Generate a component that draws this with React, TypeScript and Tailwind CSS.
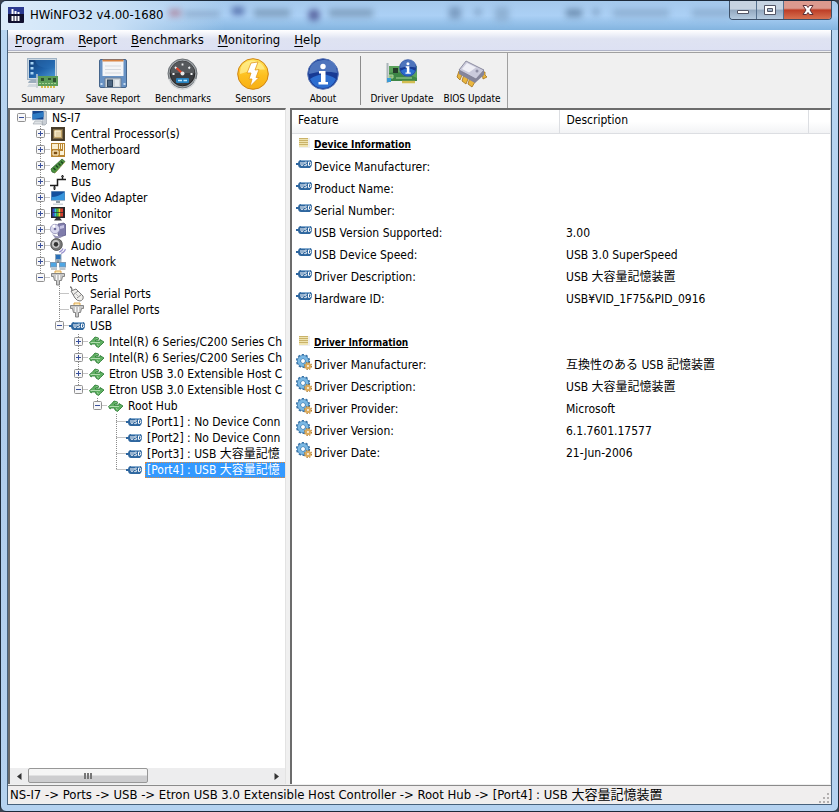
import { useState } from "react";
import type { ComponentType, ReactNode } from "react";

type IconType = ComponentType;

function Icon16({ children }: { children: ReactNode }) {
	return (
		<svg width="16" height="16" viewBox="0 0 16 16" className="block shrink-0" aria-hidden="true">
			{children}
		</svg>
	);
}

function ComputerIcon() {
	return (
		<Icon16>
			<path d="M12 1h3l1 2v10l-2 2h-3z" fill="#c9ced4" stroke="#8c949c" strokeWidth=".6" />
			<rect x="1" y=".5" width="12" height="10" fill="#d7dde2" />
			<rect x="1.5" y="1" width="11" height="8.5" fill="#16478f" />
			<path d="M1.5 9.500V4l11-2v5z" fill="#2f7cc4" />
			<path d="M4 11h6l2 3H2z" fill="#dfe3e6" stroke="#9aa3ab" strokeWidth=".6" />
		</Icon16>
	);
}

function CpuIcon() {
	return (
		<Icon16>
			<rect x="1" y="1" width="14" height="14" fill="#4a3f2c" />
			<rect x="2.500" y="2.500" width="11" height="11" fill="#7d6a48" stroke="#2b2418" strokeDasharray="1 1" />
			<rect x="4.500" y="4.500" width="7" height="7" fill="#e4d2a8" stroke="#c0a468" />
			<path d="M5 10.500V5h5.500" stroke="#fff6da" fill="none" />
		</Icon16>
	);
}

function BoardIcon() {
	return (
		<Icon16>
			<rect x="1" y="1" width="14" height="14" fill="#b98530" />
			<path d="M2 2h6v5H2z" fill="#f8edcc" />
			<path d="M3 3.500h4M3 5.500h4M9.500 2v5M11.500 2v5M13.500 2v11M3 9h5v4H3z" stroke="#fbf2d8" fill="none" />
			<path d="M10 9h3v4h-3z" fill="#fbf2d8" />
			<path d="M4 10h3v2H4z" fill="#7b4d12" />
		</Icon16>
	);
}

function MemoryIcon() {
	return (
		<Icon16>
			<path d="M1 11 12 1l3 2.500L5 15l-3-1z" fill="#4c9440" stroke="#2a5a26" strokeWidth=".7" />
			<path d="m3.500 10 2 2M6 7.500l2 2M8.500 5.500l2 2M11 3.500l2 2" stroke="#1d4023" strokeWidth="1.400" />
			<path d="M5 15 15 4" stroke="#cbb656" strokeWidth=".9" strokeDasharray="1 1" />
		</Icon16>
	);
}

function BusIcon() {
	return (
		<Icon16>
			<path d="M0 11.500h7.500V5.500H16M12.500 1v4M4.500 11.500V16" stroke="#1c1c1c" strokeWidth="1.500" fill="none" />
			<path d="M11 2.500h3M3 14h3" stroke="#555" />
		</Icon16>
	);
}

function DisplayIcon() {
	return (
		<Icon16>
			<rect x="1" y="1" width="14" height="10" fill="#9eb4c8" />
			<rect x="1.500" y="1.500" width="13" height="8.500" fill="#14509e" />
			<path d="M1.500 10V7q7 0 13-5v8z" fill="#3795dc" />
			<path d="M6 11h4v2H6z" fill="#8f9ba6" />
			<path d="M3 13.500h10v1.500H3z" fill="#ced5db" />
		</Icon16>
	);
}

function ColorMonitorIcon() {
	return (
		<Icon16>
			<rect x="1" y="1" width="14" height="11" fill="#26262a" />
			<path d="M2.500 2.500h2v8h-2z" fill="#3848d8" />
			<path d="M4.500 2.500h2v8h-2z" fill="#35c4d4" />
			<path d="M6.500 2.500h2v8h-2z" fill="#48c23c" />
			<path d="M8.500 2.500h2v8h-2z" fill="#e8d838" />
			<path d="M10.500 2.500h2.500v8h-2.500z" fill="#d83c30" />
			<path d="M2.500 6.500H13" stroke="#26262a" strokeWidth=".7" />
			<path d="M6 12h4l2 2.500H4z" fill="#36363a" />
		</Icon16>
	);
}

function DriveIcon() {
	return (
		<Icon16>
			<path d="M8 2l6-1 2 2v10l-6 2-2-2z" fill="#7f7cab" stroke="#57547f" strokeWidth=".7" />
			<path d="m10 4 4-1v3l-4 1z" fill="#c6c4e4" />
			<circle cx="5" cy="7" r="4.700" fill="#d9d8ee" stroke="#8e8cb4" strokeWidth=".8" />
			<path d="M5 7 2 4a4 4 0 0 1 3-1.500z" fill="#fff" />
			<circle cx="5" cy="7" r="1.300" fill="#6f6c9c" />
			<path d="m2 12 4 2 7 .500-3 1.500H5z" fill="#9896b8" />
		</Icon16>
	);
}

function AudioIcon() {
	return (
		<Icon16>
			<ellipse cx="6.500" cy="6.500" rx="5.800" ry="6" fill="#777" stroke="#444" strokeWidth=".8" />
			<ellipse cx="5.800" cy="6" rx="3.800" ry="4" fill="#c9c9c9" />
			<ellipse cx="6" cy="6.300" rx="2.200" ry="2.400" fill="#333" />
			<path d="M9 14q3-.5 4-3.500M11 15.500q3.500-1 4.500-4.500" stroke="#9b93cf" fill="none" strokeWidth="1.100" />
		</Icon16>
	);
}

function NetworkIcon() {
	return (
		<Icon16>
			<path d="M8 5v3M4 10l4-2 4 2" stroke="#555" fill="none" />
			<rect x="5.500" y=".5" width="5.500" height="5" fill="#2a6fb8" stroke="#8fa6bb" />
			<path d="M5 7h6.500" stroke="#8f9ba6" strokeWidth="1.500" />
			<rect x=".5" y="8.500" width="6" height="4.500" fill="#4ea6e4" stroke="#7c98b4" />
			<rect x="9.500" y="8.500" width="6" height="4.500" fill="#4ea6e4" stroke="#7c98b4" />
			<path d="M1 15h6M9.500 15h6" stroke="#a9b4bd" strokeWidth="1.600" />
		</Icon16>
	);
}

function PlugIcon() {
	return (
		<Icon16>
			<path d="M5 3V1h6v2" fill="#ffeec0" stroke="#dca54c" />
			<path d="M1.500 3.500h13v3h-2l-1 4h-2V15h-3v-4.500h-2l-1-4h-2z" fill="#c9c9c9" stroke="#858585" />
			<path d="M6.500 5v5M9.500 5v5" stroke="#f6f6f6" />
		</Icon16>
	);
}

function SerialIcon() {
	return (
		<Icon16>
			<path d="M1 1q2 0 2 4" fill="none" stroke="#777" strokeWidth="1.300" />
			<path d="m2 5 5-2 7 7q1 4-3 5-3 0-5-3z" fill="#f0efec" stroke="#777" />
			<path d="m4 9 5-4M8 12l4.500-3.500" stroke="#888" />
			<path d="m6 7 3 3" stroke="#bbb" />
		</Icon16>
	);
}

function UsbIcon() {
	return (
		<Icon16>
			<path d="M0 8h3" stroke="#2d659f" strokeWidth="2" />
			<path d="M5 4h9q2 0 2 3.500T14 12H5Q2 12 2 8t3-4z" fill="#2f679f" />
			<path d="M5 4.500h9" stroke="#86acd0" />
			<path d="M5 6v2.500q0 1 1 1t1-1V6M10.800 6.200H9.500q-1 0-1 .8t1 .8q1.200 0 1.200.9t-1 .9H8.300M12.500 9.500V6h1q1.300 0 1.300 1.700T13.500 9.500z" fill="none" stroke="#fff" strokeWidth="1" />
		</Icon16>
	);
}

function HubIcon() {
	return (
		<Icon16>
			<path d="M1.500 8.500 4 6.500l3-3.500 3.500 1-.5 2H8L7 7h5l0-1.500L16 8l-3.500 3.500-2 2L8 12l-.5-2H4.500L3 11z" fill="#5fb062" stroke="#32803a" strokeWidth=".9" strokeLinejoin="round" />
			<path d="M2.500 8.500H12M8.500 4.500h1M9 10.500l1.500 1" stroke="#b8e2b6" strokeWidth=".9" />
		</Icon16>
	);
}

function NoteIcon() {
	return (
		<Icon16>
			<path d="M3 4h11v10H3z" fill="#efeff0" />
			<path d="M3 4h9v9H3z" fill="#efe3ae" />
			<path d="M3 4.500h9M3 6.500h9M3 8.500h9M3 10.500h9" stroke="#c9b269" />
		</Icon16>
	);
}

function GearIcon() {
	return (
		<Icon16>
			<circle cx="7" cy="7" r="6.300" fill="none" stroke="#3673a8" strokeWidth="1.600" strokeDasharray="2.200 1.758" />
			<circle cx="7" cy="7" r="4" fill="none" stroke="#3673a8" strokeWidth="4" />
			<circle cx="7" cy="7" r="4" fill="none" stroke="#7ab8e4" strokeWidth="2.800" />
			<circle cx="12" cy="12" r="3.300" fill="none" stroke="#b07828" strokeWidth="1.400" strokeDasharray="1.500 1.090" />
			<circle cx="12" cy="12" r="2" fill="#fff" stroke="#dcab5c" strokeWidth="2.200" />
		</Icon16>
	);
}

function Icon32({ children }: { children: ReactNode }) {
	return (
		<svg width="32" height="32" viewBox="0 0 32 32" className="block" aria-hidden="true">
			{children}
		</svg>
	);
}

function SummaryIcon() {
	return (
		<Icon32>
			<defs>
				<linearGradient id="screen" x1="0" y1="0" x2="1" y2="1">
					<stop offset="0" stopColor="#123c72" />
					<stop offset=".5" stopColor="#1d5fa6" />
					<stop offset="1" stopColor="#4c9ad8" />
				</linearGradient>
			</defs>
			<rect x=".5" y=".5" width="29" height="21" fill="#c8d6e2" stroke="#9fb2c4" />
			<rect x="2" y="2" width="26" height="18" fill="url(#screen)" />
			<path d="M3.500 4h3v2.500h-3zM3.500 9h3v2.500h-3zM3.500 14h3v2.500h-3z" fill="#a7d4f4" />
			<path d="M8 2q2 10 20 8V2z" fill="#2a6db4" opacity=".5" />
			<path d="M4 22h7v3H1l1-2z" fill="#9cadbc" />
			<path d="M2 26h9v3H0z" fill="#d2d9df" />
			<rect x="11" y="18" width="20" height="10" fill="#5b9c58" />
			<path d="M10 16v14" stroke="#c4ccd0" strokeWidth="1.500" />
			<path d="M14 20h3v3h-3zM21 20h3v2h-3zM26 20h3v4h-3z" fill="#2c5230" />
			<path d="M12 25.500h17" stroke="#a4d292" strokeDasharray="2 1" />
			<path d="M14 29h15" stroke="#d6be50" strokeWidth="2" strokeDasharray="2 1" />
		</Icon32>
	);
}

function FloppyIcon() {
	return (
		<Icon32>
			<rect x="2.500" y="1.500" width="27" height="28" rx="1.500" fill="#6892c4" stroke="#45658c" />
			<path d="M5.500 2h21v16h-21z" fill="#f4f5f7" />
			<path d="M5.500 1.500h21v2h-21z" fill="#d98444" />
			<path d="M8 8h16M8 11.500h16M8 15h16" stroke="#d5d9df" />
			<path d="M8 20h16v9.500H8z" fill="#ced4d8" stroke="#6a7f98" />
			<rect x="10.500" y="22" width="5" height="6.500" fill="#4d6681" stroke="#30465d" />
			<path d="M18 22h4v6h-4z" fill="#e5eaee" />
			<path d="M3.500 26h2M26.500 26h2" stroke="#c6daee" strokeWidth="2" />
		</Icon32>
	);
}

function GaugeIcon() {
	return (
		<Icon32>
			<circle cx="15.500" cy="15.500" r="14.500" fill="#9ba0a4" stroke="#6b7074" />
			<circle cx="15.500" cy="15.500" r="12.300" fill="#3b3d40" stroke="#222" />
			<path d="M3.500 15a12 12 0 0 1 24 0z" fill="#56595c" />
			<path d="M5.500 16h2M8 9l1.500 1.500M15.500 5.500v2M23 9l-1.500 1.500M25.500 16h-2" stroke="#f0f1f2" strokeWidth="1.800" />
			<path d="M15.500 15.500 9.500 10" stroke="#e2452c" strokeWidth="2.200" />
			<circle cx="15.500" cy="15.500" r="2" fill="#e8e8e8" />
			<rect x="9" y="20" width="13" height="5" rx="1" fill="#2682bf" />
			<path d="M11 22.500h4M16.500 22.500h3.500" stroke="#c3e9ff" strokeWidth="1.500" />
			<path d="M2 21a14 14 0 0 0 27 0" fill="none" stroke="#d4d7d9" strokeWidth="1.200" />
		</Icon32>
	);
}

function SensorIcon() {
	return (
		<Icon32>
			<defs>
				<linearGradient id="gold" x1="0" y1="0" x2="0" y2="1">
					<stop offset="0" stopColor="#ffe45a" />
					<stop offset=".55" stopColor="#fdbf20" />
					<stop offset="1" stopColor="#f8b014" />
				</linearGradient>
			</defs>
			<circle cx="16" cy="16" r="15.300" fill="url(#gold)" stroke="#cf8412" />
			<path d="M3 16Q2 5 14 2.500q11 0 14 9Q16 11 3 16z" fill="#fff2a0" opacity=".65" />
			<path d="m14 5 7-1-3 8 4-.5-3 8h3l-9 9 2-7.500h-3l2-6h-4z" fill="#fff" stroke="#e39a1b" strokeWidth=".8" />
		</Icon32>
	);
}

function InfoDisc() {
	return (
		<>
			<circle cx="16" cy="16" r="15.300" fill="#173a94" stroke="#5573b4" />
			<path d="M3 21q13-9 26 0-4 9-13 9T3 21z" fill="#2d6ed0" />
			<path d="M2 16Q2 3 16 2t14 13q-14-3-28 1z" fill="#6288ca" opacity=".75" />
			<circle cx="16" cy="8.500" r="2.700" fill="#fff" />
			<path d="M12 13h6.500v11H21v2.500h-9.500V24H14v-8.500h-2z" fill="#fff" />
		</>
	);
}

function AboutIcon() {
	return (
		<Icon32>
			<InfoDisc />
		</Icon32>
	);
}

function DriverIcon() {
	return (
		<Icon32>
			<path d="M1.500 5v20" stroke="#aab5b9" strokeWidth="2" />
			<path d="M3 8h28v15H3z" fill="#5ba35c" />
			<path d="M3 8h28M3 15q12-3 28 5v3H3z" fill="#3d8646" />
			<path d="M7 10h5v5H7z" fill="#243c2b" />
			<path d="M3 17h4v3H3zM10 20h16" stroke="#a7d598" fill="#85ad73" />
			<path d="M16 24h13" stroke="#d3be52" strokeWidth="2.500" />
			<path d="M1 20h4v4H1z" fill="#3b9bd8" />
			<g transform="translate(13 1) scale(.56)">
				<InfoDisc />
			</g>
		</Icon32>
	);
}

function BiosIcon() {
	return (
		<Icon32>
			<path d="m3 13 3 0v4l-2 5-3-3zM8 16l4 1v4l-2 5-4-3zM14 19l5 1v4l-3 5-4-3z" fill="#eab63e" stroke="#a27220" strokeWidth=".8" />
			<path d="m26 14 3 0 0 3 2 2-4 2z" fill="#eab63e" stroke="#a27220" strokeWidth=".8" />
			<path d="m3 12 7-8 18 8v5l-9 8-16-9z" fill="#85859a" />
			<path d="m3 12 7-9 18 9-8 9z" fill="#cacadb" stroke="#7c7c92" strokeWidth=".8" />
			<path d="m6 11 5-6 9 4.500-7 5z" fill="#efeff6" />
			<circle cx="21" cy="13" r="1.500" fill="#8f8fa5" />
		</Icon32>
	);
}

type Node = { label: string; icon: IconType; closed?: boolean; selected?: boolean; children?: Node[] };

const tree: Node = {
	label: "NS-I7",
	icon: ComputerIcon,
	children: [
		{ label: "Central Processor(s)", icon: CpuIcon, closed: true },
		{ label: "Motherboard", icon: BoardIcon, closed: true },
		{ label: "Memory", icon: MemoryIcon, closed: true },
		{ label: "Bus", icon: BusIcon, closed: true },
		{ label: "Video Adapter", icon: DisplayIcon, closed: true },
		{ label: "Monitor", icon: ColorMonitorIcon, closed: true },
		{ label: "Drives", icon: DriveIcon, closed: true },
		{ label: "Audio", icon: AudioIcon, closed: true },
		{ label: "Network", icon: NetworkIcon, closed: true },
		{
			label: "Ports",
			icon: PlugIcon,
			children: [
				{ label: "Serial Ports", icon: SerialIcon },
				{ label: "Parallel Ports", icon: PlugIcon },
				{
					label: "USB",
					icon: UsbIcon,
					children: [
						{ label: "Intel(R) 6 Series/C200 Series Ch", icon: HubIcon, closed: true },
						{ label: "Intel(R) 6 Series/C200 Series Ch", icon: HubIcon, closed: true },
						{ label: "Etron USB 3.0 Extensible Host C", icon: HubIcon, closed: true },
						{
							label: "Etron USB 3.0 Extensible Host C",
							icon: HubIcon,
							children: [
								{
									label: "Root Hub",
									icon: HubIcon,
									children: [
										{ label: "[Port1] : No Device Conn", icon: UsbIcon },
										{ label: "[Port2] : No Device Conn", icon: UsbIcon },
										{ label: "[Port3] : USB 大容量記憶", icon: UsbIcon },
										{ label: "[Port4] : USB 大容量記憶", icon: UsbIcon, selected: true },
									],
								},
							],
						},
					],
				},
			],
		},
	],
};

function Guide({ d, box }: { d: string; box?: "plus" | "minus" }) {
	return (
		<svg width="19" height="16" viewBox="0 0 19 16" className="block shrink-0" aria-hidden="true">
			<path d={d} stroke="#8a8a8a" strokeDasharray="1 1" fill="none" />
			{box && (
				<>
					<rect x="5.500" y="3.500" width="8" height="8" rx="1" fill="#f7f7f8" stroke="#919191" />
					<path d={box === "plus" ? "M7 7.500h5M9.500 5v5" : "M7 7.500h5"} stroke="#39509c" />
				</>
			)}
		</svg>
	);
}

function TreeNode({ node, guides = [], root, last }: { node: Node; guides?: boolean[]; root?: boolean; last: boolean }) {
	const [open, setOpen] = useState(!node.closed);
	const expandable = !!node.children || !!node.closed;
	const vertical = root ? "" : last ? "M9.500 0v8" : "M9.500 0v16";
	const guide = <Guide d={`${vertical}M9.500 7.500h10`} box={expandable ? (open ? "minus" : "plus") : undefined} />;

	return (
		<li role="treeitem" aria-expanded={expandable ? open : undefined} aria-selected={!!node.selected}>
			<div className="flex h-4 items-center whitespace-nowrap">
				{guides.map((line, i) => (
					<Guide key={i} d={line ? "M9.500 0v16" : ""} />
				))}
				{expandable ? (
					<button type="button" aria-label={`Toggle ${node.label}`} onClick={() => setOpen(!open)} className="shrink-0">
						{guide}
					</button>
				) : (
					guide
				)}
				<node.icon />
				<span
					className={
						node.selected
							? "ml-[3px] flex-1 border border-r-0 border-dotted border-[#e08a3c] bg-[#3399ff] pl-px leading-[14px] text-white"
							: "ml-[3px] pl-0.5 leading-4"
					}
				>
					{node.label}
				</span>
			</div>
			{open && node.children && (
				<ul role="group">
					{node.children.map((child, i) => (
						<TreeNode
							key={i}
							node={child}
							guides={root ? [false] : [...guides, !last]}
							last={i === node.children!.length - 1}
						/>
					))}
				</ul>
			)}
		</li>
	);
}

type Section = { title: string; icon: IconType; rows: [string, string][] };

const sections: Section[] = [
	{
		title: "Device Information",
		icon: UsbIcon,
		rows: [
			["Device Manufacturer:", ""],
			["Product Name:", ""],
			["Serial Number:", ""],
			["USB Version Supported:", "3.00"],
			["USB Device Speed:", "USB 3.0 SuperSpeed"],
			["Driver Description:", "USB 大容量記憶装置"],
			["Hardware ID:", "USB¥VID_1F75&PID_0916"],
		],
	},
	{
		title: "Driver Information",
		icon: GearIcon,
		rows: [
			["Driver Manufacturer:", "互換性のある USB 記憶装置"],
			["Driver Description:", "USB 大容量記憶装置"],
			["Driver Provider:", "Microsoft"],
			["Driver Version:", "6.1.7601.17577"],
			["Driver Date:", "21-Jun-2006"],
		],
	},
];

function DetailSection({ section }: { section: Section }) {
	return (
		<tbody>
			<tr className="h-[22px]">
				<th colSpan={3} scope="rowgroup" className="p-0 text-left">
					<div className="flex h-[22px] pl-1">
						<NoteIcon />
						<span className="pl-0.5 text-[10px] leading-[22px] font-bold underline">{section.title}</span>
					</div>
				</th>
			</tr>
			{section.rows.map(([feature, value]) => (
				<tr key={feature} className="h-[22px]">
					<td className="p-0">
						<div className="flex h-[22px] pl-1">
							<section.icon />
							<span className="pl-0.5 leading-[22px]">{feature}</span>
						</div>
					</td>
					<td colSpan={2} className="p-0 pl-[7px] leading-[22px]">
						{value}
					</td>
				</tr>
			))}
		</tbody>
	);
}

const menus = ["Program", "Report", "Benchmarks", "Monitoring", "Help"];

function ToolButton({ label, icon: Icon }: { label: string; icon: IconType }) {
	return (
		<button type="button" className="flex w-[70px] shrink-0 flex-col items-center gap-0.5 pt-[5px] text-[10px] leading-[14px] whitespace-nowrap">
			<Icon />
			{label}
		</button>
	);
}

function TitleBar() {
	return (
		<header className="relative flex h-[29px] shrink-0 items-start overflow-hidden rounded-t-md bg-gradient-to-b from-[#a5c9ec] via-[#abd0f5] to-[#83b4df]">
			<div className="absolute inset-y-0 left-0 w-56 bg-gradient-to-r from-[#dcecfa] via-[#c9e0f6] to-transparent" />
			<div className="absolute inset-0 opacity-60 blur-[3px]" aria-hidden="true">
				<span className="absolute top-2 left-[168px] h-2 w-3 bg-[#a86a82]" />
				<span className="absolute top-2.5 left-[183px] h-1.5 w-9 bg-[#7492b4]" />
				<span className="absolute top-1.5 left-[231px] h-2 w-3 bg-[#263c86]" />
				<span className="absolute top-2 left-[253px] h-2 w-9 bg-[#65829f]" />
				<span className="absolute top-2 left-[307px] size-3 rounded-full bg-[#231f69]" />
				<span className="absolute top-2 left-[328px] h-2 w-11 bg-[#65829f]" />
				<span className="absolute top-1.5 left-[448px] size-3 bg-[#5c7ba0]" />
				<span className="absolute top-2 left-[474px] size-1.5 bg-[#5c7ba0]" />
				<span className="absolute top-1.5 left-[494px] size-3.5 bg-[#7c9dbf]" />
				<span className="absolute top-2 left-[565px] h-2 w-4 bg-[#486688]" />
				<span className="absolute top-2 left-[592px] size-1.5 bg-[#5c7ba0]" />
				<span className="absolute top-2 left-[612px] h-2 w-14 bg-[#7c9dbf]" />
				<span className="absolute top-2 left-[691px] h-2 w-10 bg-[#7c9dbf]" />
			</div>
			<div className="relative flex min-w-0 flex-1 items-center gap-1.5 pt-1.5 pl-[7px]">
				<svg width="16" height="16" viewBox="0 0 16 16" aria-hidden="true">
					<rect width="16" height="16" rx="1" fill="#10102e" />
					<path d="M0 0h16v7H0z" fill="#2b3a90" />
					<path d="M4.500 2v5M7.500 4v3M10.500 5v2M4.500 9v5M7.500 9v5M10.500 9v5" stroke="#fff" strokeWidth="2" />
				</svg>
				<h1 className="text-[13px] leading-4">HWiNFO32 v4.00-1680</h1>
			</div>
			<div className="relative mr-1.5 flex h-[19px] shrink-0 overflow-hidden rounded-b border border-t-0 border-[#3d5068]">
				<button type="button" aria-label="Minimize" className="flex w-[27px] items-center justify-center border-r border-[#55708e] bg-gradient-to-b from-[#c6d3e1] from-45% via-[#93a8bf] via-50% to-[#b5cbe0]">
					<svg width="14" height="14" viewBox="0 0 14 14">
						<path d="M1.500 7.500h11v3h-11z" fill="#fff" stroke="#535666" />
					</svg>
				</button>
				<button type="button" aria-label="Maximize" className="flex w-[27px] items-center justify-center border-r border-[#55708e] bg-gradient-to-b from-[#c6d3e1] from-45% via-[#93a8bf] via-50% to-[#b5cbe0]">
					<svg width="14" height="14" viewBox="0 0 14 14">
						<path fillRule="evenodd" d="M1.500 2.500h11v9h-11zM4.500 5.500v3h5v-3z" fill="#fff" stroke="#535666" />
					</svg>
				</button>
				<button type="button" aria-label="Close" className="flex w-[47px] items-center justify-center bg-gradient-to-b from-[#dc9a8e] from-40% via-[#bd3d26] via-50% to-[#d77050]">
					<svg width="14" height="14" viewBox="0 0 14 14">
						<path d="M2 2.500h3.500L7 4.500l1.500-2H12L9 7l3 4.500H8.500L7 9.500l-1.500 2H2L5 7z" fill="#fff" stroke="#5d3036" />
					</svg>
				</button>
			</div>
		</header>
	);
}

export default function App() {
	return (
		<div className="flex h-screen flex-col bg-[#3b4350] font-['DejaVu_Sans_Condensed','Noto_Sans','Noto_Sans_CJK_JP',sans-serif] text-xs text-black">
			<div className="flex min-h-0 flex-1 flex-col rounded-md border border-[#1d2a3a] bg-gradient-to-b from-[#b9d6f2] via-[#b0cdec] to-[#b5d2f0]">
				<TitleBar />
				<div className="mx-[7px] mb-[7px] flex min-h-0 flex-1 flex-col bg-[#f0f0f0] outline outline-[#47617c]">
					<nav className="flex h-[21px] shrink-0 items-center border-b border-[#b0b4c8] bg-gradient-to-b from-white via-[#dfe3f2] via-45% to-[#dde1f3] text-[13px]">
						{menus.map((menu) => (
							<button key={menu} type="button" className="px-[7px] leading-5">
								<span className="underline underline-offset-2">{menu[0]}</span>
								{menu.slice(1)}
							</button>
						))}
					</nav>
					<div className="mt-px flex h-[56px] shrink-0 overflow-hidden border-t border-[#a0a0a0]">
						<ToolButton label="Summary" icon={SummaryIcon} />
						<ToolButton label="Save Report" icon={FloppyIcon} />
						<ToolButton label="Benchmarks" icon={GaugeIcon} />
						<ToolButton label="Sensors" icon={SensorIcon} />
						<ToolButton label="About" icon={AboutIcon} />
						<div className="mt-[3px] mr-1.5 mb-[3px] ml-0.5 w-px bg-[#8c8c8c]" />
						<ToolButton label="Driver Update" icon={DriverIcon} />
						<ToolButton label="BIOS Update" icon={BiosIcon} />
						<div className="w-px bg-[#a0a0a0]" />
					</div>
					<main className="flex min-h-0 flex-1 gap-1">
						<section className="flex w-[278px] shrink-0 flex-col border-t-2 border-r border-l-2 border-t-[#6c6c6c] border-r-[#e3e3e3] border-l-[#6c6c6c] bg-white">
							<ul role="tree" aria-label="Hardware" className="min-h-0 flex-1 overflow-hidden pl-0.5">
								<TreeNode node={tree} root last />
							</ul>
							<div className="flex h-4 shrink-0 bg-[#ededee]">
								<button type="button" aria-label="Scroll left" className="flex w-[18px] items-center justify-center">
									<svg width="5" height="7" viewBox="0 0 5 7">
										<path d="M4.500 0v7L0 3.500z" fill="#333" />
									</svg>
								</button>
								<div className="flex-1">
									<div className="flex h-[15px] w-1/2 items-center justify-center gap-px rounded-xs border border-[#979797] bg-gradient-to-b from-[#f5f5f5] from-45% to-[#cdcdcf] to-55%">
										<span className="h-1.5 w-0.5 bg-[#777]" />
										<span className="h-1.5 w-0.5 bg-[#777]" />
										<span className="h-1.5 w-0.5 bg-[#777]" />
									</div>
								</div>
								<button type="button" aria-label="Scroll right" className="flex w-[18px] items-center justify-center">
									<svg width="5" height="7" viewBox="0 0 5 7">
										<path d="M.5 0v7L5 3.500z" fill="#333" />
									</svg>
								</button>
							</div>
						</section>
						<section className="min-w-0 flex-1 overflow-hidden border-t-2 border-r border-l-2 border-t-[#6c6c6c] border-r-[#e3e3e3] border-l-[#6c6c6c] bg-white">
							<table className="w-full table-fixed border-collapse">
								<colgroup>
									<col className="w-[267px]" />
									<col className="w-[249px]" />
									<col />
								</colgroup>
								<thead>
									<tr className="h-[23px] bg-gradient-to-b from-white from-50% to-[#f2f3f5]">
										<th className="border-r border-b border-[#dcdee2] p-0 pb-0.5 pl-1.5 text-left font-normal">Feature</th>
										<th className="border-r border-b border-[#dcdee2] p-0 pb-0.5 pl-[7px] text-left font-normal">Description</th>
										<td className="border-b border-[#dcdee2] p-0" />
									</tr>
								</thead>
								<DetailSection section={sections[0]} />
								<tbody>
									<tr className="h-[22px]">
										<td colSpan={3} className="p-0" />
									</tr>
								</tbody>
								<DetailSection section={sections[1]} />
							</table>
						</section>
					</main>
					<footer className="mt-px flex h-[19px] shrink-0 items-center border-t border-[#8b8b8b] bg-[#f0eeee] pl-0.5 text-[13px]">
						<span className="min-w-0 flex-1 truncate">
							NS-I7 -&gt; Ports -&gt; USB -&gt; Etron USB 3.0 Extensible Host Controller -&gt; Root Hub -&gt; [Port4] : USB 大容量記憶装置
						</span>
						<svg width="12" height="12" viewBox="0 0 12 12" className="self-end" aria-hidden="true">
							<path d="M8 1h2v2H8zM8 5h2v2H8zM4 5h2v2H4zM8 9h2v2H8zM4 9h2v2H4zM0 9h2v2H0z" fill="#b3b0b0" />
						</svg>
					</footer>
				</div>
			</div>
		</div>
	);
}
